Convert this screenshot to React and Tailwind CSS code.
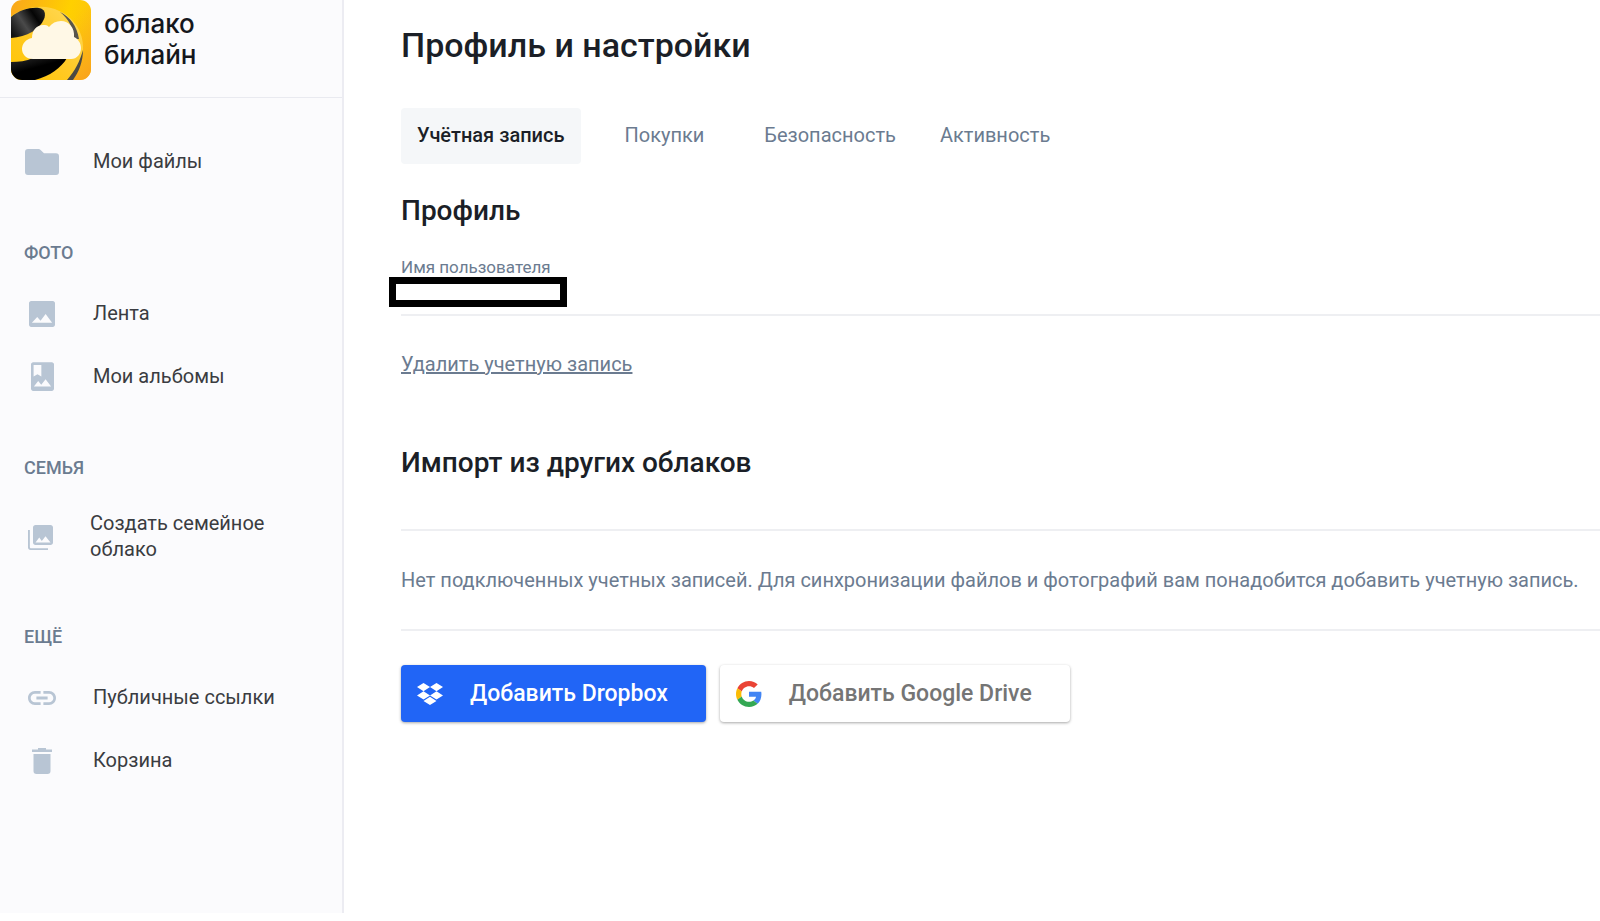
import React, { useState } from 'react';
import { FaDropbox } from 'react-icons/fa';

// Sidebar icons share one colour, sizes differ per glyph
const FolderIcon = () => (
  <svg width="34" height="26" viewBox="0 0 34 26" fill="currentColor">
    <path d="M3 0h10.500c.8 0 1.500.3 2.100.9l3.400 3.300h12a3 3 0 0 1 3 3V23a3 3 0 0 1-3 3H3a3 3 0 0 1-3-3V3a3 3 0 0 1 3-3z" />
  </svg>
);

const ImageIcon = () => (
  <svg width="26" height="26" viewBox="3 3 18 18" fill="currentColor">
    <path d="M21 19.500V4.500c0-.8-.7-1.500-1.500-1.500h-15C3.700 3 3 3.700 3 4.500v15c0 .8.7 1.500 1.500 1.500h15c.8 0 1.500-.7 1.500-1.500zM8.700 14l2.300 2.600L14.500 12l4.500 6H5l3.700-4z" />
  </svg>
);

const AlbumIcon = () => (
  <svg width="23" height="29" viewBox="4 2 16 20" fill="currentColor">
    <path d="M18.500 2h-13C4.700 2 4 2.700 4 3.500v17c0 .8.7 1.500 1.500 1.500h13c.8 0 1.500-.7 1.500-1.500v-17c0-.8-.7-1.500-1.500-1.500zM5.800 4h5.400v8l-2.700-1.500L5.800 12V4zm.2 15l3-3.860 2.140 2.580 3-3.860L18 19H6z" />
  </svg>
);

const LibraryIcon = () => (
  <svg width="25" height="25" viewBox="2 2 20 20" fill="currentColor">
    <path d="M22 16V4c0-1.100-.9-2-2-2H8c-1.100 0-2 .9-2 2v12c0 1.100.9 2 2 2h12c1.100 0 2-.9 2-2zm-11-4l2.030 2.710L16 11l4 5H8l3-4zM2 6v14c0 1.100.9 2 2 2h14v-1.500H4.500c-.6 0-1-.4-1-1V6H2z" />
  </svg>
);

const LinkIcon = () => (
  <svg width="28" height="14" viewBox="2 7 20 10" fill="currentColor">
    <path d="M3.900 12c0-1.710 1.390-3.100 3.100-3.100h4V7H7c-2.760 0-5 2.240-5 5s2.240 5 5 5h4v-1.900H7c-1.710 0-3.100-1.390-3.100-3.100zM8 13h8v-2H8v2zm9-6h-4v1.900h4c1.710 0 3.100 1.390 3.100 3.100s-1.390 3.100-3.100 3.100h-4V17h4c2.760 0 5-2.240 5-5s-2.240-5-5-5z" />
  </svg>
);

const TrashIcon = () => (
  <svg width="20" height="26" viewBox="0 0 20 26" fill="currentColor">
    <path d="M6 0h8v1.500h6V4H0V1.500h6z" />
    <path d="M1.500 6h17v17a3 3 0 0 1-3 3h-11a3 3 0 0 1-3-3z" />
  </svg>
);

const GoogleIcon = () => (
  <svg width="26" height="26" viewBox="0 0 48 48">
    <path fill="#EA4335" d="M24 9.500c3.540 0 6.710 1.220 9.210 3.600l6.850-6.850C35.900 2.380 30.470 0 24 0 14.620 0 6.510 5.380 2.560 13.220l7.980 6.190C12.430 13.720 17.740 9.500 24 9.500z" />
    <path fill="#4285F4" d="M46.980 24.550c0-1.570-.15-3.090-.38-4.550H24v9.020h12.940c-.58 2.960-2.260 5.480-4.780 7.180l7.730 6c4.510-4.180 7.090-10.360 7.090-17.650z" />
    <path fill="#FBBC05" d="M10.530 28.590c-.48-1.450-.76-2.990-.76-4.590s.27-3.140.76-4.590l-7.980-6.190C.92 16.460 0 20.120 0 24c0 3.880.92 7.540 2.560 10.780l7.970-6.190z" />
    <path fill="#34A853" d="M24 48c6.480 0 11.930-2.130 15.890-5.810l-7.730-6c-2.150 1.450-4.920 2.300-8.160 2.300-6.260 0-11.570-4.220-13.470-9.910l-7.980 6.190C6.510 42.620 14.620 48 24 48z" />
  </svg>
);

const Logo = () => (
  <svg width="80" height="80" viewBox="0 0 80 80" className="shrink-0">
    <defs>
      <linearGradient id="logoBg" x1="0" y1="0" x2="1" y2="0.3">
        <stop offset="0" stopColor="#f9a61c" />
        <stop offset="0.7" stopColor="#ffd000" />
        <stop offset="1" stopColor="#fdc50c" />
      </linearGradient>
      <linearGradient id="logoBody" x1="0" y1="1" x2="1" y2="0">
        <stop offset="0" stopColor="#ffc400" />
        <stop offset="0.5" stopColor="#ffca28" />
        <stop offset="1" stopColor="#ffdc5e" />
      </linearGradient>
      <linearGradient id="logoCorner" x1="0.5" y1="0.5" x2="1" y2="1">
        <stop offset="0" stopColor="#fbb01c" stopOpacity="0" />
        <stop offset="1" stopColor="#f9a01c" />
      </linearGradient>
      <linearGradient id="logoSpot" x1="0" y1="0.8" x2="1" y2="0.2">
        <stop offset="0" stopColor="#111111" />
        <stop offset="0.4" stopColor="#4a4a4a" />
        <stop offset="0.75" stopColor="#050505" />
        <stop offset="1" stopColor="#222222" />
      </linearGradient>
      <linearGradient id="logoStripe" x1="0" y1="0" x2="0.7" y2="1">
        <stop offset="0" stopColor="#2b2b2b" />
        <stop offset="0.5" stopColor="#000000" />
      </linearGradient>
      <clipPath id="logoClip">
        <rect width="80" height="80" rx="11" />
      </clipPath>
    </defs>
    <g clipPath="url(#logoClip)">
      <rect width="80" height="80" fill="url(#logoBg)" />
      <rect width="80" height="80" fill="url(#logoCorner)" />
      <path d="M0 16C12 8 27 5 40 8c20 5 33 22 32 42-1 12-5 22-11 30H0z" fill="url(#logoBody)" />
      <path d="M0 17C8 10 20 7 28 8c6 1 7 6 5 11C29 29 16 37 0 38z" fill="url(#logoSpot)" />
      <path d="M49 12c10 5 17 14 19 27h-5C62 28 58 19 49 12z" fill="#57554d" />
      <path d="M0 62c8 0 15-1 22-4h34c-6 10-17 18-32 22H0z" fill="url(#logoStripe)" />
      <path d="M72 50c0 11-4 22-10 30h-6c8-9 13-19 16-30z" fill="#4b4943" />
      <path d="M22 59c-7 0-11-5-11-10s4-10 10-11c0-8 5-13 11-13 3 0 4 0 6 2 3-4 7-6 12-6 8 0 14 7 13 16 4 2 7 6 7 11 0 6-4 11-10 11z" fill="#fff8e6" />
    </g>
  </svg>
);

const sections = [
  {
    items: [{ label: 'Мои файлы', Icon: FolderIcon }],
  },
  {
    title: 'ФОТО',
    items: [
      { label: 'Лента', Icon: ImageIcon },
      { label: 'Мои альбомы', Icon: AlbumIcon },
    ],
  },
  {
    title: 'СЕМЬЯ',
    items: [{ label: 'Создать семейное облако', Icon: LibraryIcon, wide: true }],
  },
  {
    title: 'ЕЩЁ',
    items: [
      { label: 'Публичные ссылки', Icon: LinkIcon },
      { label: 'Корзина', Icon: TrashIcon },
    ],
  },
];

const tabs = ['Учётная запись', 'Покупки', 'Безопасность', 'Активность'];

function Sidebar() {
  return (
    <aside className="mb-2 w-[344px] shrink-0 border-r-2 border-[#ececf2] bg-[#fbfbfd]">
      <a href="#" className="flex h-[98px] items-start gap-[13px] border-b border-[#e9eaf0] pl-[11px]">
        <Logo />
        <span className="pt-2 font-['Inter',sans-serif] text-[26px] leading-[31px] font-medium text-[#15171c]">
          облако
          <br />
          билайн
        </span>
      </a>

      <nav className="flex flex-col gap-12 pt-8 pl-6">
        {sections.map(({ title, items }) => (
          <div key={title || 'files'}>
            {title && (
              <h2 className="mb-[17px] text-[18px] leading-6 font-medium text-[#6b7b90]">{title}</h2>
            )}
            {items.map(({ label, Icon, wide }) => (
              <a
                key={label}
                href="#"
                className={`flex items-center gap-[33px] text-[#3a3c41] ${wide ? 'h-20 pr-14' : 'h-[63px]'}`}
              >
                <span
                  className={`flex shrink-0 justify-center text-[#b8c5d4] ${wide ? 'w-[33px]' : 'w-9'}`}
                >
                  <Icon />
                </span>
                <span className="pb-[2px]">{label}</span>
              </a>
            ))}
          </div>
        ))}
      </nav>
    </aside>
  );
}

export default function App() {
  const [activeTab, setActiveTab] = useState(tabs[0]);

  return (
    <div className="flex min-h-screen bg-white font-['Roboto',sans-serif] text-[20px] leading-[26px]">
      <Sidebar />

      <main className="min-w-0 flex-1 pt-[23px] pl-[57px]">
        <h1 className="text-[34px] leading-[44px] font-medium text-[#1b1f27]">Профиль и настройки</h1>

        <div role="tablist" className="mt-[41px] flex">
          {tabs.map((tab) => (
            <button
              key={tab}
              type="button"
              role="tab"
              aria-selected={tab === activeTab}
              onClick={() => setActiveTab(tab)}
              className={`h-14 rounded px-4 pb-[2px] not-last:mr-7 nth-3:mr-3 ${
                tab === activeTab ? 'bg-[#f5f7f9] font-medium text-[#1b1f27]' : 'text-[#6b7b90]'
              }`}
            >
              {tab}
            </button>
          ))}
        </div>

        <section>
          <h2 className="mt-[29px] text-[28px] leading-9 font-medium text-[#1b1f27]">Профиль</h2>
          <div className="mt-7 flex flex-col items-start border-b-2 border-[#eeeff2] pb-[7px]">
            <label htmlFor="username" className="text-[17px] leading-5 text-[#6b7b90]">
              Имя пользователя
            </label>
            <input
              id="username"
              type="text"
              readOnly
              className="-ml-3 h-[30px] w-[178px] border-7 border-black bg-white"
            />
          </div>
          <a href="#" className="mt-[35px] inline-block text-[#6b7b90] underline">
            Удалить учетную запись
          </a>
        </section>

        <section>
          <h2 className="mt-[68px] text-[28px] leading-9 font-medium text-[#1b1f27]">
            Импорт из других облаков
          </h2>
          <p className="mt-12 border-y-2 border-[#eeeff2] py-9 text-[#6b7b90]">
            Нет подключенных учетных записей. Для синхронизации файлов и фотографий вам понадобится
            добавить учетную запись.
          </p>
          <div className="mt-[34px] flex gap-[14px] text-[23px] font-medium">
            <button
              type="button"
              className="flex h-[57px] items-center gap-[27px] rounded bg-[#2165f6] pr-[38px] pl-4 text-white shadow-[0_1px_3px_rgba(0,0,0,0.35)]"
            >
              <FaDropbox className="size-[26px]" />
              Добавить Dropbox
            </button>
            <button
              type="button"
              className="flex h-[57px] items-center gap-[27px] rounded bg-white pr-[38px] pl-4 text-[#757575] shadow-[0_1px_3px_rgba(0,0,0,0.35)]"
            >
              <GoogleIcon />
              Добавить Google Drive
            </button>
          </div>
        </section>
      </main>
    </div>
  );
}
